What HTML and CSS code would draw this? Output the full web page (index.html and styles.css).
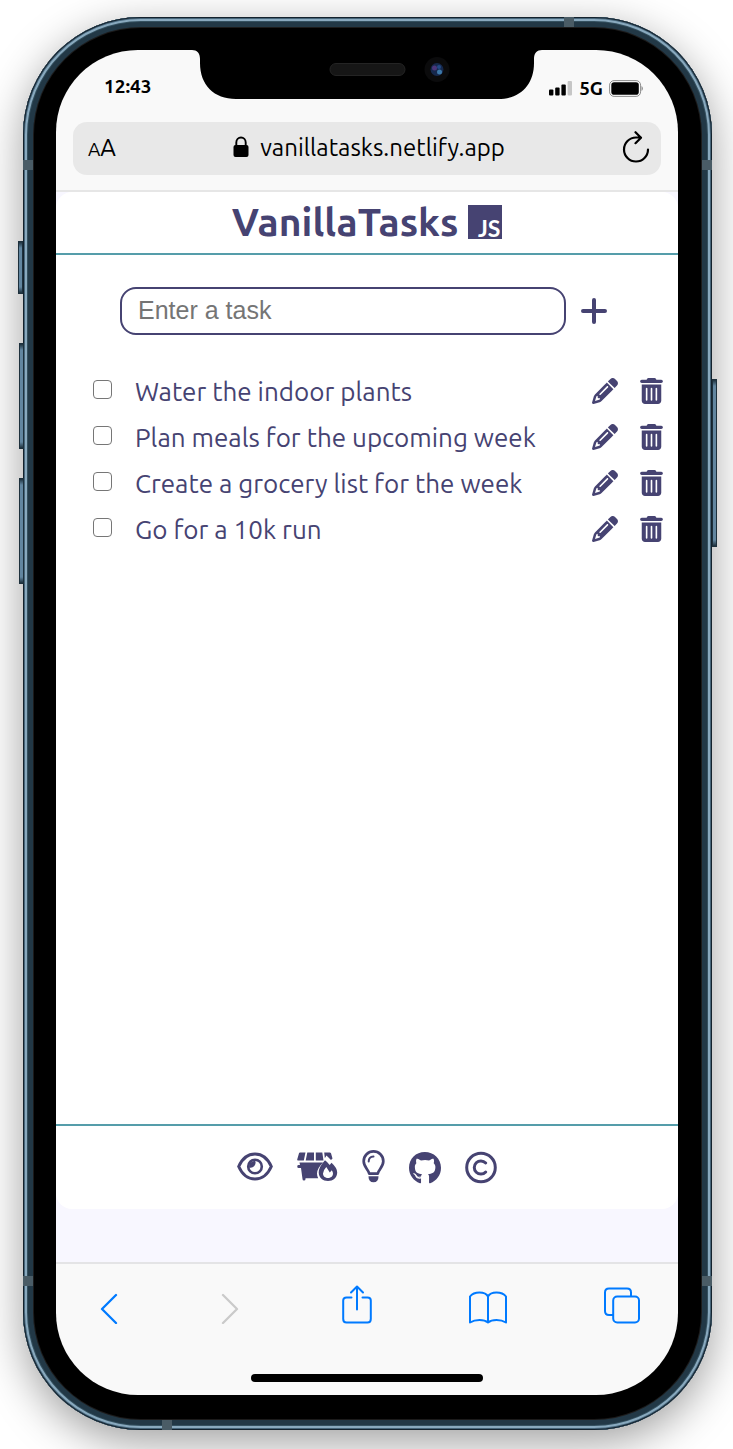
FILE: index.html
```html
<!DOCTYPE html>
<html lang="en">
<head>
<meta charset="utf-8">
<meta name="viewport" content="width=device-width, initial-scale=1">
<title>VanillaTasks</title>
<link rel="stylesheet" href="styles.css">
</head>
<body>
<svg class="defs" aria-hidden="true">
  <symbol id="pencil" viewBox="0 0 512 512"><path d="M410.3 231l11.3-11.3-33.9-33.9-62.1-62.1L291.7 89.8l-11.3 11.3-22.6 22.6L58.6 322.9c-10.4 10.4-18 23.3-22.2 37.4L1 480.7c-2.5 8.4-.2 17.5 6.1 23.7s15.3 8.5 23.7 6.1l120.3-35.4c14.1-4.2 27-11.8 37.4-22.2L387.7 253.7 410.3 231zM160 399.4l-9.1 22.7c-4 3.1-8.5 5.4-13.3 6.9L59.4 452l23-78.1c1.4-4.9 3.8-9.4 6.9-13.3l22.7-9.1v32c0 8.8 7.2 16 16 16h32zM362.7 18.7L348.3 33.2 325.7 55.8 314.3 67.1l33.9 33.9 62.1 62.1 33.9 33.9 11.3-11.3 22.6-22.6 14.5-14.5c25-25 25-65.5 0-90.5L453.3 18.7c-25-25-65.5-25-90.5 0zm-47.4 168l-144 144c-6.2 6.2-16.4 6.2-22.6 0s-6.2-16.4 0-22.6l144-144c6.2-6.2 16.4-6.2 22.6 0s6.2 16.4 0 22.6z"/></symbol>
  <symbol id="trash" viewBox="0 0 448 512"><path d="M135.2 17.7C140.6 6.8 151.7 0 163.8 0H284.2c12.1 0 23.2 6.8 28.6 17.7L320 32h96c17.7 0 32 14.3 32 32s-14.3 32-32 32H32C14.3 96 0 81.7 0 64S14.3 32 32 32h96l7.2-14.3zM32 128H416V448c0 35.3-28.7 64-64 64H96c-35.3 0-64-28.7-64-64V128zm96 64c-8.8 0-16 7.2-16 16V432c0 8.8 7.2 16 16 16s16-7.2 16-16V208c0-8.8-7.2-16-16-16zm96 0c-8.800 0-16 7.200-16 16V432c0 8.800 7.200 16 16 16s16-7.200 16-16V208c0-8.800-7.200-16-16-16zm96 0c-8.800 0-16 7.200-16 16V432c0 8.800 7.200 16 16 16s16-7.200 16-16V208c0-8.800-7.200-16-16-16z"/></symbol>
</svg>

<div class="phone">
  <span class="band band-top"></span>
  <span class="band band-bottom"></span>
  <span class="band band-left-high"></span>
  <span class="band band-left-low"></span>
  <span class="band band-right-high"></span>
  <span class="band band-right-low"></span>
  <span class="key key-mute"></span>
  <span class="key key-up"></span>
  <span class="key key-down"></span>
  <span class="key key-power"></span>

  <div class="screen">
    <svg class="notch" viewBox="0 0 350 50" aria-hidden="true">
      <path d="M0 0C5 0 8 3 8 9V13C8 35 22 49 44 49H306C328 49 342 35 342 13V9C342 3 345 0 350 0Z" fill="#000"/>
      <rect x="138" y="13.500" width="75" height="12" rx="6" fill="#161616" stroke="#242424"/>
      <circle cx="245" cy="19.500" r="12.500" fill="#0b0b0c"/>
      <circle cx="245" cy="19.500" r="6.500" fill="#16284c"/>
      <circle cx="242.500" cy="18" r="2.500" fill="#4a3679"/>
      <circle cx="247.500" cy="22" r="2.500" fill="#3c78a8"/>
      <circle cx="247" cy="17" r="2" fill="#234a86"/>
    </svg>

    <div class="browser-top">
      <div class="status">
        <span class="time">12:43</span>
        <span class="signal">
          <svg width="24" height="15" viewBox="0 0 24 15" aria-hidden="true"><g fill="#000"><rect x="0" y="8.500" width="4.400" height="6" rx="1"/><rect x="6.200" y="6.500" width="4.400" height="8" rx="1"/><rect x="12.400" y="3.500" width="4.400" height="11" rx="1"/></g><rect x="18.600" y="0" width="4.400" height="14.500" rx="1" fill="#c6c6c6"/></svg>
          <span>5G</span>
          <svg width="34" height="17" viewBox="0 0 34 17" aria-hidden="true"><rect x=".6" y=".6" width="31" height="15.800" rx="4.500" fill="none" stroke="#8c8c8c"/><rect x="2.300" y="2.300" width="27.500" height="12.400" rx="2.800" fill="#000"/><path d="M32.500 6v5q1.400-.8 1.400-2.500t-1.400-2.500z" fill="#8c8c8c"/></svg>
        </span>
      </div>
      <div class="address">
        <button class="plain text-size" aria-label="Text size"><span class="small-a">A</span><span>A</span></button>
        <span class="url">
          <svg width="16" height="22" viewBox="0 0 16 22" aria-hidden="true"><rect x=".5" y="9" width="15" height="12" rx="2" fill="#000"/><path d="M3.300 10V6.500a4.700 5 0 0 1 9.400 0V10" fill="none" stroke="#000" stroke-width="1.900"/></svg>
          <span>vanillatasks.netlify.app</span>
        </span>
        <button class="plain" aria-label="Reload"><svg width="28" height="32" viewBox="0 0 28 32" fill="none" stroke="#000" stroke-width="2.200" stroke-linecap="round" stroke-linejoin="round" aria-hidden="true"><path d="M26 18.500A12 12 0 1 1 14 6.500H19M13.500 1.200L19 6.700 13.500 12.200"/></svg></button>
      </div>
    </div>

    <div class="page">
      <div class="app">
        <header class="app-header">
          <h1>VanillaTasks</h1>
          <span class="js">JS</span>
        </header>
        <main>
          <form class="entry" onsubmit="return false">
            <input class="entry-text" type="text" placeholder="Enter a task" aria-label="Enter a task">
            <button class="plain" aria-label="Add task"><svg width="26" height="26" viewBox="0 0 26 26" stroke="currentColor" stroke-width="4" stroke-linecap="round" aria-hidden="true"><path d="M13 2V24M2 13H24"/></svg></button>
          </form>
          <ul class="tasks">
            <li><input type="checkbox" id="t1"><label for="t1">Water the indoor plants</label><button class="plain" aria-label="Edit"><svg width="26" height="26"><use href="#pencil"/></svg></button><button class="plain" aria-label="Delete"><svg width="23" height="26"><use href="#trash"/></svg></button></li>
            <li><input type="checkbox" id="t2"><label for="t2">Plan meals for the upcoming week</label><button class="plain" aria-label="Edit"><svg width="26" height="26"><use href="#pencil"/></svg></button><button class="plain" aria-label="Delete"><svg width="23" height="26"><use href="#trash"/></svg></button></li>
            <li><input type="checkbox" id="t3"><label for="t3">Create a grocery list for the week</label><button class="plain" aria-label="Edit"><svg width="26" height="26"><use href="#pencil"/></svg></button><button class="plain" aria-label="Delete"><svg width="23" height="26"><use href="#trash"/></svg></button></li>
            <li><input type="checkbox" id="t4"><label for="t4">Go for a 10k run</label><button class="plain" aria-label="Edit"><svg width="26" height="26"><use href="#pencil"/></svg></button><button class="plain" aria-label="Delete"><svg width="23" height="26"><use href="#trash"/></svg></button></li>
          </ul>
        </main>
        <footer class="app-footer">
          <button class="plain" aria-label="Show"><svg width="36" height="34" viewBox="0 0 36 34" fill="none" stroke="currentColor" stroke-width="3" aria-hidden="true"><path d="M1.700 16.500C5 9 11 4 18 4S31 9 34.300 16.500C31 24 25 29 18 29S5 24 1.700 16.500Z"/><circle cx="18" cy="16.500" r="6.800" stroke-width="2.600"/><path d="M18 10.500a5 5 0 0 1-6 7l.5-4.500z" fill="currentColor" stroke="none"/></svg></button>
          <button class="plain" aria-label="Clear all"><svg width="41" height="34" viewBox="0 0 41 34" fill="currentColor" aria-hidden="true"><path d="M3 2.500H8.500L6.800 10.500H1Q0 10.500 .2 9.500L2 3.300Q2.200 2.500 3 2.500ZM10.300 2.500H17V10.500H8.700ZM18.800 2.500H25.300L26.500 10.500H18.800ZM27.200 2.500H32.700Q33.600 2.500 34 3.300L35.500 8.500 34 10 29.500 5.500Q28.300 7.500 27.800 8Z"/><path d="M2.500 12.500H26Q20 18.500 20 23.500 20 26 21.200 28.200H8.500V29Q8.500 30.500 7 30.500 5.500 30.500 5.500 29L4 18H1.500Q.3 18 .3 16.800V16.200Q.3 15 1.500 15H3Z"/><path fill-rule="evenodd" d="M28 10.200Q30.500 12 32.700 15L34.500 12.800Q40.200 18 40.200 22.500C40.200 27.500 36 31 31 31S21.700 27.500 21.700 22.500Q21.700 17 28 10.200ZM29.300 17Q26 20.500 26 23.500C26 26.500 28.500 28 31 28S36 26.500 36 23.500Q36 22 34.800 20.200L32.800 22.500Z"/></svg></button>
          <button class="plain" aria-label="Tips"><svg width="23" height="34" viewBox="0 0 23 34" fill="none" stroke="currentColor" stroke-width="2.700" stroke-linejoin="round" aria-hidden="true"><path d="M7.300 23.700C6.500 19.500 1.700 17 1.700 11.200A9.800 9.800 0 0 1 21.300 11.200C21.300 17 16.500 19.500 15.700 23.700Z"/><path d="M6.700 11.500Q6.700 6.800 11.500 6.500" stroke-width="2" stroke-linecap="round"/><path d="M6.500 26.300H16.500Q16.500 32.300 11.500 32.300T6.500 26.300Z" fill="currentColor" stroke="none"/></svg></button>
          <a href="#github" aria-label="GitHub"><svg width="32" height="34" viewBox="0 -24 496 527" fill="currentColor" aria-hidden="true"><path d="M165.900 397.400c0 2-2.300 3.600-5.200 3.600-3.300.3-5.600-1.300-5.600-3.600 0-2 2.300-3.600 5.200-3.600 3-.3 5.600 1.300 5.600 3.600zm-31.100-4.500c-.7 2 1.300 4.300 4.300 4.900 2.600 1 5.600 0 6.200-2s-1.300-4.300-4.300-5.200c-2.600-.7-5.500.3-6.200 2.300zm44.200-1.700c-2.900.7-4.900 2.600-4.600 4.900.3 2 2.900 3.300 5.900 2.600 2.900-.7 4.900-2.600 4.600-4.600-.3-1.900-3-3.200-5.900-2.900zM244.800 8C106.100 8 0 113.300 0 252c0 110.900 69.800 205.800 169.500 239.200 12.800 2.300 17.300-5.600 17.300-12.100 0-6.200-.3-40.400-.3-61.400 0 0-70 15-84.700-29.800 0 0-11.400-29.100-27.800-36.600 0 0-22.900-15.700 1.600-15.400 0 0 24.900 2 38.600 25.800 21.900 38.600 58.600 27.500 72.900 20.900 2.300-16 8.800-27.100 16-33.700-55.900-6.200-112.300-14.300-112.300-110.500 0-27.500 7.600-41.300 23.600-58.900-2.600-6.500-11.100-33.300 2.600-67.900 20.900-6.500 69 27 69 27 20-5.600 41.500-8.500 62.800-8.500s42.800 2.900 62.800 8.500c0 0 48.100-33.600 69-27 13.700 34.700 5.200 61.400 2.600 67.900 16 17.700 25.800 31.500 25.800 58.900 0 96.500-58.900 104.200-114.800 110.500 9.200 7.900 17 22.900 17 46.400 0 33.700-.3 75.400-.3 83.600 0 6.500 4.600 14.400 17.300 12.100C428.200 457.800 496 362.900 496 252 496 113.300 383.500 8 244.800 8z"/></svg></a>
          <a href="#copyright" aria-label="Copyright"><svg width="32" height="34" viewBox="0 0 32 34" fill="none" stroke="currentColor" stroke-width="3" aria-hidden="true"><circle cx="16" cy="17.500" r="14.300"/><path d="M20.700 13A6.600 6.600 0 1 0 20.700 22" stroke-linecap="round"/></svg></a>
        </footer>
      </div>
    </div>

    <nav class="browser-bottom">
      <div class="tools">
        <div class="page-tools">
          <button class="plain" aria-label="Back"><svg width="18" height="40" viewBox="0 0 18 40" fill="none" stroke="#007aff" stroke-width="2.300" stroke-linecap="round" stroke-linejoin="round"><path d="M16 11L2 25 16 39"/></svg></button>
          <button class="plain" aria-label="Forward"><svg width="18" height="40" viewBox="0 0 18 40" fill="none" stroke="#cacaca" stroke-width="2.300" stroke-linecap="round" stroke-linejoin="round"><path d="M2 11L16 25 2 39"/></svg></button>
          <button class="plain" aria-label="Share"><svg width="30" height="40" viewBox="0 0 30 40" fill="none" stroke="#007aff" stroke-width="2" stroke-linecap="round" stroke-linejoin="round"><path d="M9.500 13.500H4.500Q1.200 13.500 1.200 16.500V35Q1.200 38.500 4.500 38.500H25.500Q28.800 38.500 28.800 35V16.500Q28.800 13.500 25.500 13.500H20.500M15 25.500V3M9 8.500L15 2.500 21 8.500"/></svg></button>
        </div>
        <button class="plain" aria-label="Bookmarks"><svg width="40" height="40" viewBox="0 0 40 40" fill="none" stroke="#007aff" stroke-width="2" stroke-linejoin="round"><path d="M20 12.500Q18 8.500 11.500 8.500T2 12.500V38.500Q6 36 11.500 36T20 38.500Q23 36 28.500 36T38 38.500V12.500Q35 8.500 28.500 8.500T20 12.500ZM20 12.500V38.500"/></svg></button>
        <button class="plain" aria-label="Tabs"><svg width="36" height="40" viewBox="0 0 36 40" fill="none" stroke="#007aff" stroke-width="2" stroke-linejoin="round"><path d="M9.500 31H5Q1 31 1 27V8.500Q1 4.500 5 4.500H23Q27 4.500 27 8.500V12.500"/><rect x="9.200" y="12.500" width="25.800" height="26" rx="4"/></svg></button>
      </div>
      <span class="home"></span>
    </nav>
  </div>
</div>
</body>
</html>
```
FILE: styles.css
```css
:root {
  --ink: #464372;
  --line: #559daa;
}

* {
  box-sizing: border-box;
}

body {
  margin: 0;
  min-height: 100vh;
  padding: 17px 21px 19px 23px;
  display: flex;
  overflow-x: hidden;
  background: #fff;
  font-family: "Ubuntu", "Noto Sans", sans-serif;
  color: #000;
}

.defs {
  position: absolute;
  width: 0;
  height: 0;
}

svg {
  display: block;
  fill: currentColor;
}

svg[fill="none"] {
  fill: none;
}

.plain {
  display: block;
  padding: 0;
  border: 0;
  background: none;
  color: inherit;
  font: inherit;
}

.phone {
  position: relative;
  flex: 1;
  display: flex;
  padding: 33px 34px 35px 33px;
  border-radius: 118px;
  background: #000;
  box-shadow:
    inset 0 0 0 1px #14222d,
    inset 0 0 0 2px #46657a,
    inset 0 0 0 4px #89a9be,
    inset 0 0 0 5px #34505f,
    inset 0 0 0 10px #223846,
    inset 0 0 0 11px #1c1b1b,
    0 12px 44px rgba(0, 0, 0, 0.38);
}

.band {
  position: absolute;
  width: 10px;
  height: 10px;
  background: #4a5c66;
}

.band-top { top: 0; right: 138px; }
.band-bottom { bottom: 0; left: 139px; }
.band-left-high { top: 143px; left: 0; }
.band-left-low { bottom: 144px; left: 0; }
.band-right-high { top: 143px; right: 0; }
.band-right-low { bottom: 144px; right: 0; }

.key {
  position: absolute;
  width: 5px;
  border: 1px solid #1d303c;
  background: linear-gradient(#1d303c, #6286a0 6px, #6286a0 calc(100% - 6px), #1d303c);
}

.key-mute { top: 224px; left: -5px; height: 53px; }
.key-up { top: 326px; left: -4px; height: 106px; }
.key-down { top: 461px; left: -4px; height: 106px; }
.key-power { top: 362px; right: -5px; height: 168px; }

.screen {
  position: relative;
  flex: 1;
  min-width: 0;
  display: flex;
  flex-direction: column;
  overflow: hidden;
  border-radius: 82px;
  background: #f9f9f9;
}

.notch {
  position: absolute;
  top: 0;
  left: 50%;
  width: 350px;
  height: 50px;
  margin-left: -175px;
}

.browser-top {
  padding: 24px 17px 15px;
  border-bottom: 2px solid #e6e6e6;
}

.status {
  display: flex;
  align-items: center;
  justify-content: space-between;
  height: 26px;
  margin-bottom: 22px;
  padding: 0 18px 0 31px;
  font-size: 19px;
  line-height: 24px;
  font-weight: 700;
}

.time {
  padding-bottom: 2px;
}

.signal {
  display: flex;
  align-items: center;
  gap: 6px;
  padding-top: 2px;
}

.address {
  display: flex;
  align-items: center;
  justify-content: space-between;
  height: 53px;
  padding: 0 11px 3px 15px;
  border-radius: 14px;
  background: #e8e8e8;
  font-size: 24px;
}

.small-a {
  font-size: 19px;
}

.url {
  display: flex;
  align-items: center;
  gap: 11px;
}

.page {
  flex: 1;
  display: flex;
  padding-bottom: 53px;
  background: #f8f7ff;
}

.app {
  flex: 1;
  min-width: 0;
  display: flex;
  flex-direction: column;
  border-radius: 16px;
  background: #fff;
  color: var(--ink);
}

.app-header {
  display: flex;
  align-items: center;
  justify-content: center;
  gap: 10px;
  height: 63px;
  padding-bottom: 2px;
  border-bottom: 2px solid var(--line);
}

h1 {
  margin: 0;
  font-size: 39px;
  line-height: 58px;
  font-weight: 700;
}

.js {
  display: flex;
  align-items: flex-end;
  justify-content: flex-end;
  width: 34px;
  height: 34px;
  padding-right: 2px;
  background: var(--ink);
  color: #fff;
  font: 700 23px/22px "Lato", sans-serif;
}

main {
  flex: 1;
  padding: 32px 15px 0 37px;
}

.entry {
  display: flex;
  align-items: center;
  gap: 15px;
  margin: 0 56px 33px 27px;
}

.entry-text {
  flex: 1;
  min-width: 0;
  height: 48px;
  padding: 0 16px 2px;
  border: 2px solid var(--ink);
  border-radius: 16px;
  background: #fff;
  color: var(--ink);
  font: 25px "Liberation Sans", sans-serif;
}

.entry-text::placeholder {
  color: #757575;
}

.tasks {
  margin: 0;
  padding: 0;
  list-style: none;
}

.tasks li {
  display: flex;
  align-items: center;
  height: 46px;
}

.tasks input {
  appearance: none;
  width: 19px;
  height: 19px;
  margin: 0 23px 4px 0;
  border: 1px solid #767676;
  border-radius: 4px;
  background: #fff;
}

.tasks input:checked {
  background: var(--ink);
}

.tasks label {
  flex: 1;
  font-size: 26px;
}

.tasks button + button {
  margin-left: 22px;
}

.app-footer {
  display: flex;
  align-items: flex-start;
  justify-content: center;
  gap: 24px;
  height: 85px;
  padding-top: 24px;
  border-top: 2px solid var(--line);
}

.app-footer a {
  color: inherit;
}

.browser-bottom {
  display: flex;
  flex-direction: column;
  align-items: center;
  justify-content: space-between;
  height: 133px;
  padding: 20px 0 13px;
  border-top: 2px solid #e4e4e6;
}

.tools {
  display: flex;
  justify-content: space-between;
  width: 100%;
  padding: 0 38px 0 44px;
}

.page-tools {
  display: flex;
  gap: 103px;
}

.home {
  width: 232px;
  height: 8px;
  border-radius: 4px;
  background: #000;
}
```
